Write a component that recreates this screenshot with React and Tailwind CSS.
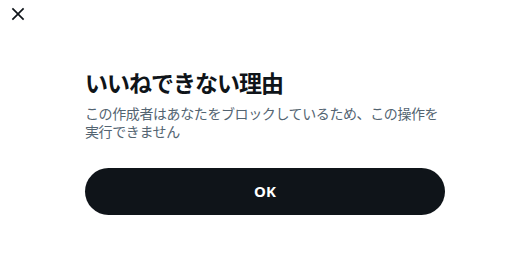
export default function App() {
  return (
    <div className="w-[525px] h-[272px] bg-white overflow-hidden">
      <div className="flex pl-[8px] pt-[4px]">
        <svg viewBox="0 0 24 24" className="w-[20px] h-[20px]" fill="#0f1419">
          <path d="M10.59 12L4.54 5.96l1.42-1.42L12 10.59l6.04-6.05 1.42 1.42L13.41 12l6.05 6.04-1.42 1.42L12 13.41l-6.04 6.05-1.42-1.42L10.59 12z" />
        </svg>
      </div>
      <div className="ml-[85px] w-[360px] mt-[44px] flex flex-col">
        <div className="text-[23px] leading-[28px] font-bold tracking-[-1px] text-[#0f1419] font-['Noto_Sans_CJK_JP',sans-serif]">
          いいねできない理由
        </div>
        <div className="mt-[8px] text-[14px] leading-[18px] tracking-[-0.4px] text-[#536471] font-['Noto_Sans_CJK_JP',sans-serif]">
          この作成者はあなたをブロックしているため、この操作を実行できません
        </div>
        <button className="mt-[28px] h-[47px] w-full rounded-full bg-[#0f1419] text-white text-[15px] font-bold font-['Noto_Sans',sans-serif] flex items-center justify-center">
          OK
        </button>
      </div>
    </div>
  );
}
